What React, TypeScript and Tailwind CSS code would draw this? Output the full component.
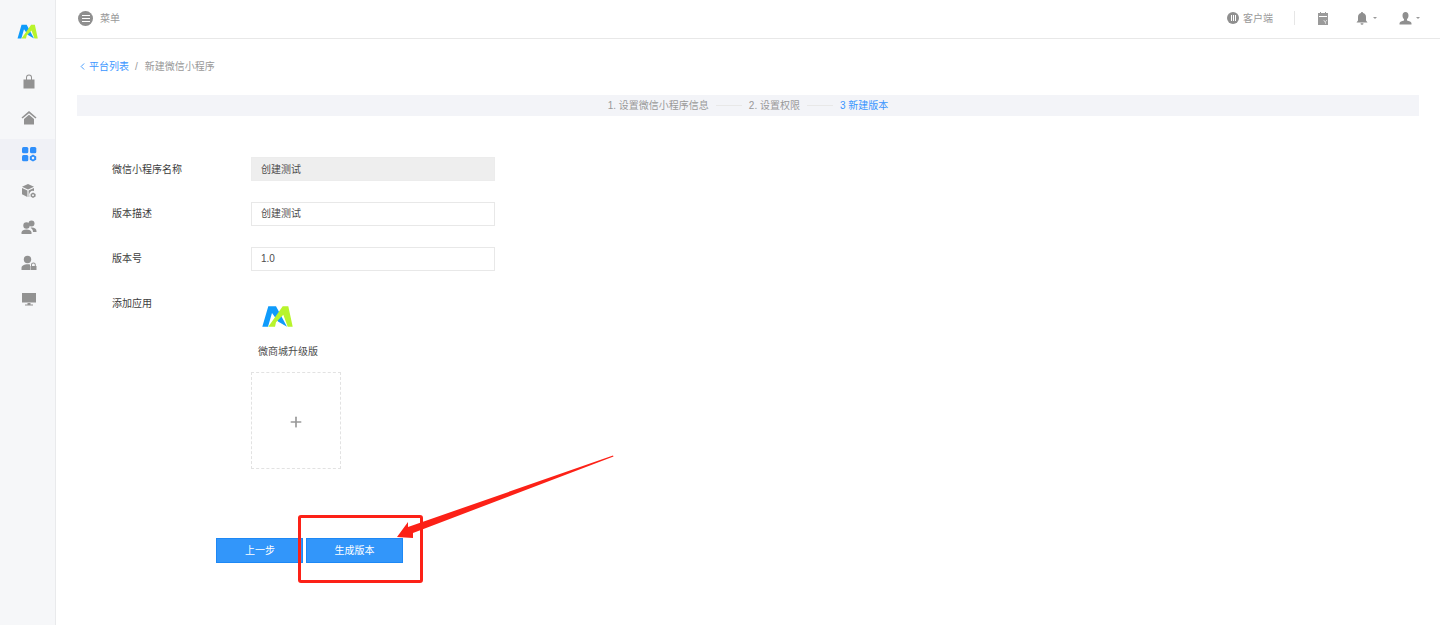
import { ChevronLeft, Plus } from "lucide-react";

const FONT = "font-['Liberation_Sans','Noto_Sans_CJK_SC',sans-serif]";

function Logo({ className }: { className: string }) {
  return (
    <svg viewBox="0 0 32 24" className={className}>
      <path d="M0.3 21.7 L6.3 1.3 H14 L25 21.7 L16 16.5 L10 8 L6 21.7 Z" fill="#0f9bfb" />
      <path d="M6.3 21.7 L20.7 1.3 H26.3 L30.7 21.7 H25.7 L21.3 9.7 L14 17.3 L13 21.7 Z" fill="#b8f42c" />
    </svg>
  );
}

function SideIcon({ d, active }: { d: React.ReactNode; active?: boolean }) {
  return (
    <div className="flex h-[36.2px] items-center">
      <div className={`flex h-[31px] w-full items-center justify-center pl-[3px] ${active ? "bg-[#f0f1f6]" : ""}`}>
        <svg viewBox="0 0 16 16" className={`h-4 w-4 ${active ? "fill-[#2f8ffb]" : "fill-[#929292]"}`}>
          {d}
        </svg>
      </div>
    </div>
  );
}

const sideIcons = [
  <path key="bag" d="M2.5 5.5 H5 V3.5 A3 3 0 0 1 11 3.5 V5.5 H13.5 V14.5 H2.5 Z M6 5.5 H10 V3.5 A2 2 0 0 0 6 3.5 Z" fillRule="evenodd" />,
  <path key="home" d="M8 1 L15.5 7.5 L14.5 8.5 L8 3.2 L1.5 8.5 L0.5 7.5 Z M3 9 L8 4.8 L13 9 V14.5 H3 Z" />,
  <g key="apps">
    <rect x="1" y="1" width="6.3" height="6.3" rx="1.5" />
    <rect x="9" y="1" width="6.3" height="6.3" rx="1.5" />
    <rect x="1" y="9" width="6.3" height="6.3" rx="1.5" />
    <path d="M12 8.6 L15.2 10.4 V13.8 L12 15.6 L8.8 13.8 V10.4 Z M12 10.8 A1.3 1.3 0 1 0 12 13.4 A1.3 1.3 0 1 0 12 10.8 Z" fillRule="evenodd" />
  </g>,
  <g key="box">
    <path d="M7 1 L13 3.8 L7 6.6 L1 3.8 Z M1 5 L6.4 7.5 V14 L1 11.2 Z M7.6 7.5 L13 5 V8 A4 4 0 0 0 8.4 13.5 L7.6 14 Z" />
    <path d="M12 9.5 L14.6 11 V13.6 L12 15 L9.6 13.6 V11 Z M12 11.3 A1 1 0 1 0 12 13.3 A1 1 0 1 0 12 11.3 Z" fillRule="evenodd" />
  </g>,
  <g key="users">
    <circle cx="10.5" cy="4.5" r="3" />
    <path d="M10 8.5 C13 8.2 15.5 9.5 15.5 12 V13 H12 C12 11 11 9.5 9.5 9 Z" />
    <circle cx="5.5" cy="6.5" r="3.2" />
    <path d="M0.5 15 V13.5 C0.5 11.5 3 10.4 5.5 10.4 C8 10.4 10.5 11.5 10.5 13.5 V15 Z" />
  </g>,
  <g key="userlock">
    <circle cx="6.5" cy="4.5" r="3.7" />
    <path d="M0.5 15 V13 C0.5 10.5 3.5 9.3 6.5 9.3 C7.5 9.3 8.2 9.4 9 9.6 V15 Z" />
    <path d="M10 11 V9.8 A2.4 2.4 0 0 1 14.8 9.8 V11 H15.5 V15 H9.5 V11 Z M11 11 H13.8 V9.8 A1.4 1.4 0 0 0 11 9.8 Z" fillRule="evenodd" />
  </g>,
  <path key="screen" d="M1 2 H15 V11.5 H1 Z M6.5 12 H9.5 V13.5 H12 V14.5 H4 V13.5 H6.5 Z" />,
];

function FieldRow({ label, value, disabled, className }: { label: string; value: string; disabled?: boolean; className: string }) {
  return (
    <div className={`flex items-center ${className}`}>
      <span className={`w-[139px] text-[#3d3d3d] ${disabled ? "" : "pb-[2px]"}`}>{label}</span>
      <div
        className={`flex h-6 w-[244px] items-center border px-[9px] text-[#4d4d4d] ${
          disabled ? "border-[#ececec] bg-[#eeeeee]" : "border-[#e8e8e8] bg-white pb-[2px]"
        }`}
      >
        {value}
      </div>
    </div>
  );
}

export default function App() {
  return (
    <div className={`${FONT} relative flex h-[625px] w-[1440px] overflow-hidden bg-white text-[10px]`}>
      <aside className="w-14 shrink-0 border-r border-[#e9eaec] bg-[#f6f7f9]">
        <div className="flex h-[64px] items-center justify-center">
          <Logo className="h-4 w-[22px]" />
        </div>
        <div>
          {sideIcons.map((icon, i) => (
            <SideIcon key={i} d={icon} active={i === 2} />
          ))}
        </div>
      </aside>

      <div className="flex min-w-0 flex-1 flex-col">
        <header className="flex h-[39px] shrink-0 items-center justify-between border-b border-[#e8e8e8] pb-[2px] pl-[22px] pr-5 text-[#999]">
          <div className="flex items-center gap-[7px]">
            <span className="flex h-[15px] w-[15px] flex-col items-center justify-center gap-[2px] rounded-full bg-[#8f8f8f]">
              <i className="h-px w-2 bg-white" />
              <i className="h-px w-2 bg-white" />
              <i className="h-px w-2 bg-white" />
            </span>
            <span>菜单</span>
          </div>
          <div className="flex items-center">
            <span className="flex h-3 w-3 items-center justify-center gap-px rounded-full bg-[#8f8f8f]">
              <i className="h-[6px] w-px bg-white" />
              <i className="h-[6px] w-px bg-white" />
              <i className="h-[6px] w-px bg-white" />
            </span>
            <span className="ml-[4px]">客户端</span>
            <span className="ml-[21px] h-[14px] w-px bg-[#e6e6e6]" />
            <svg viewBox="0 0 12 13" className="ml-[22px] h-[13px] w-3 fill-[#9a9a9a]">
              <path d="M1 1 H3 V0 H4 V1 H8 V0 H9 V1 H11 V13 H1 Z M2 4 V5 H10 V4 Z M7 8 L8.2 10 L9.4 8 H10 L8.5 10.4 V12 H8 V10.4 L6.4 8 Z" fillRule="evenodd" />
            </svg>
            <svg viewBox="0 0 12 13" className="ml-[27px] h-[13px] w-3 fill-[#8f8f8f]">
              <path d="M6 0 C6.6 0 7 .4 7 1 C9 1.5 10 3 10 5 V8.5 L11.5 10.5 H.5 L2 8.5 V5 C2 3 3 1.5 5 1 C5 .4 5.4 0 6 0 Z M4.5 11.3 H7.5 A1.5 1.5 0 0 1 4.5 11.3 Z" />
            </svg>
            <span className="ml-[5px] h-0 w-0 border-x-2 border-t-2 border-x-transparent border-t-[#999]" />
            <svg viewBox="0 0 13 13" className="ml-[22px] h-[13px] w-[13px] fill-[#8f8f8f]">
              <path d="M6.5 0 C8.4 0 9.5 1.4 9.5 3.4 C9.5 5 8.8 6.4 8 7.2 V8.4 C10 9 12.5 9.6 12.5 11.4 V12.5 H.5 V11.4 C.5 9.6 3 9 5 8.4 V7.2 C4.2 6.4 3.5 5 3.5 3.4 C3.5 1.4 4.6 0 6.5 0 Z" />
            </svg>
            <span className="ml-[4px] h-0 w-0 border-x-2 border-t-2 border-x-transparent border-t-[#999]" />
          </div>
        </header>

        <main className="flex flex-1 flex-col px-[21px]">
          <nav className="mt-[20px] flex h-[14px] items-center text-[#999]">
            <ChevronLeft className="h-[11px] w-[11px] text-[#3a96ff]" strokeWidth={2} />
            <span className="ml-[1px] text-[#3a96ff]">平台列表</span>
            <span className="ml-[6px] mr-[7px]">/</span>
            <span>新建微信小程序</span>
          </nav>

          <div className="mt-[22px] flex h-[21px] items-center justify-center bg-[#f3f4f8] text-[#999]">
            <span>1. 设置微信小程序信息</span>
            <i className="mx-[7px] h-px w-[26px] bg-[#e8e8e8]" />
            <span>2. 设置权限</span>
            <i className="mx-[7px] h-px w-[26px] bg-[#e8e8e8]" />
            <span className="text-[#3a96ff]">3 新建版本</span>
          </div>

          <div className="pl-[35px]">
            <FieldRow className="mt-[41px]" label="微信小程序名称" value="创建测试" disabled />
            <FieldRow className="mt-[21px]" label="版本描述" value="创建测试" />
            <FieldRow className="mt-[21px]" label="版本号" value="1.0" />
            <div className="mt-[25px] flex items-start text-[#3d3d3d]">
              <span className="w-[139px]">添加应用</span>
              <div>
                <Logo className="ml-[11px] mt-[9px] h-6 w-8" />
                <p className="ml-[7px] mt-[16px] leading-[14px] text-[#4d4d4d]">微商城升级版</p>
                <div className="mt-[13px] flex h-[97px] w-[90px] items-center justify-center border border-dashed border-[#e2e2e2] pt-[3px]">
                  <Plus className="h-4 w-4 text-[#999]" strokeWidth={2.5} />
                </div>
              </div>
            </div>
          </div>

          <div className="ml-[139px] mt-[69px] flex gap-[3px] text-white">
            <button className="h-[25px] w-[87px] border border-[#1e88f5] bg-[#3296fa] pl-px">上一步</button>
            <button className="h-[25px] w-[97px] border border-[#1e88f5] bg-[#3296fa]">生成版本</button>
          </div>
        </main>
      </div>

      {/* annotation drawn on top of the screenshot */}
      <div className="absolute left-[298px] top-[515px] h-[68px] w-[125px] rounded-[3px] border-[3px] border-[#fc2117]" />
      <svg className="pointer-events-none absolute left-[390px] top-[450px]" width="230" height="95" viewBox="0 0 230 95">
        <path d="M223 5.5 L223.5 6.5 L23 83 L23 88 L7 87 L18 72 L18 77 Z" fill="#fc2117" />
      </svg>
    </div>
  );
}
